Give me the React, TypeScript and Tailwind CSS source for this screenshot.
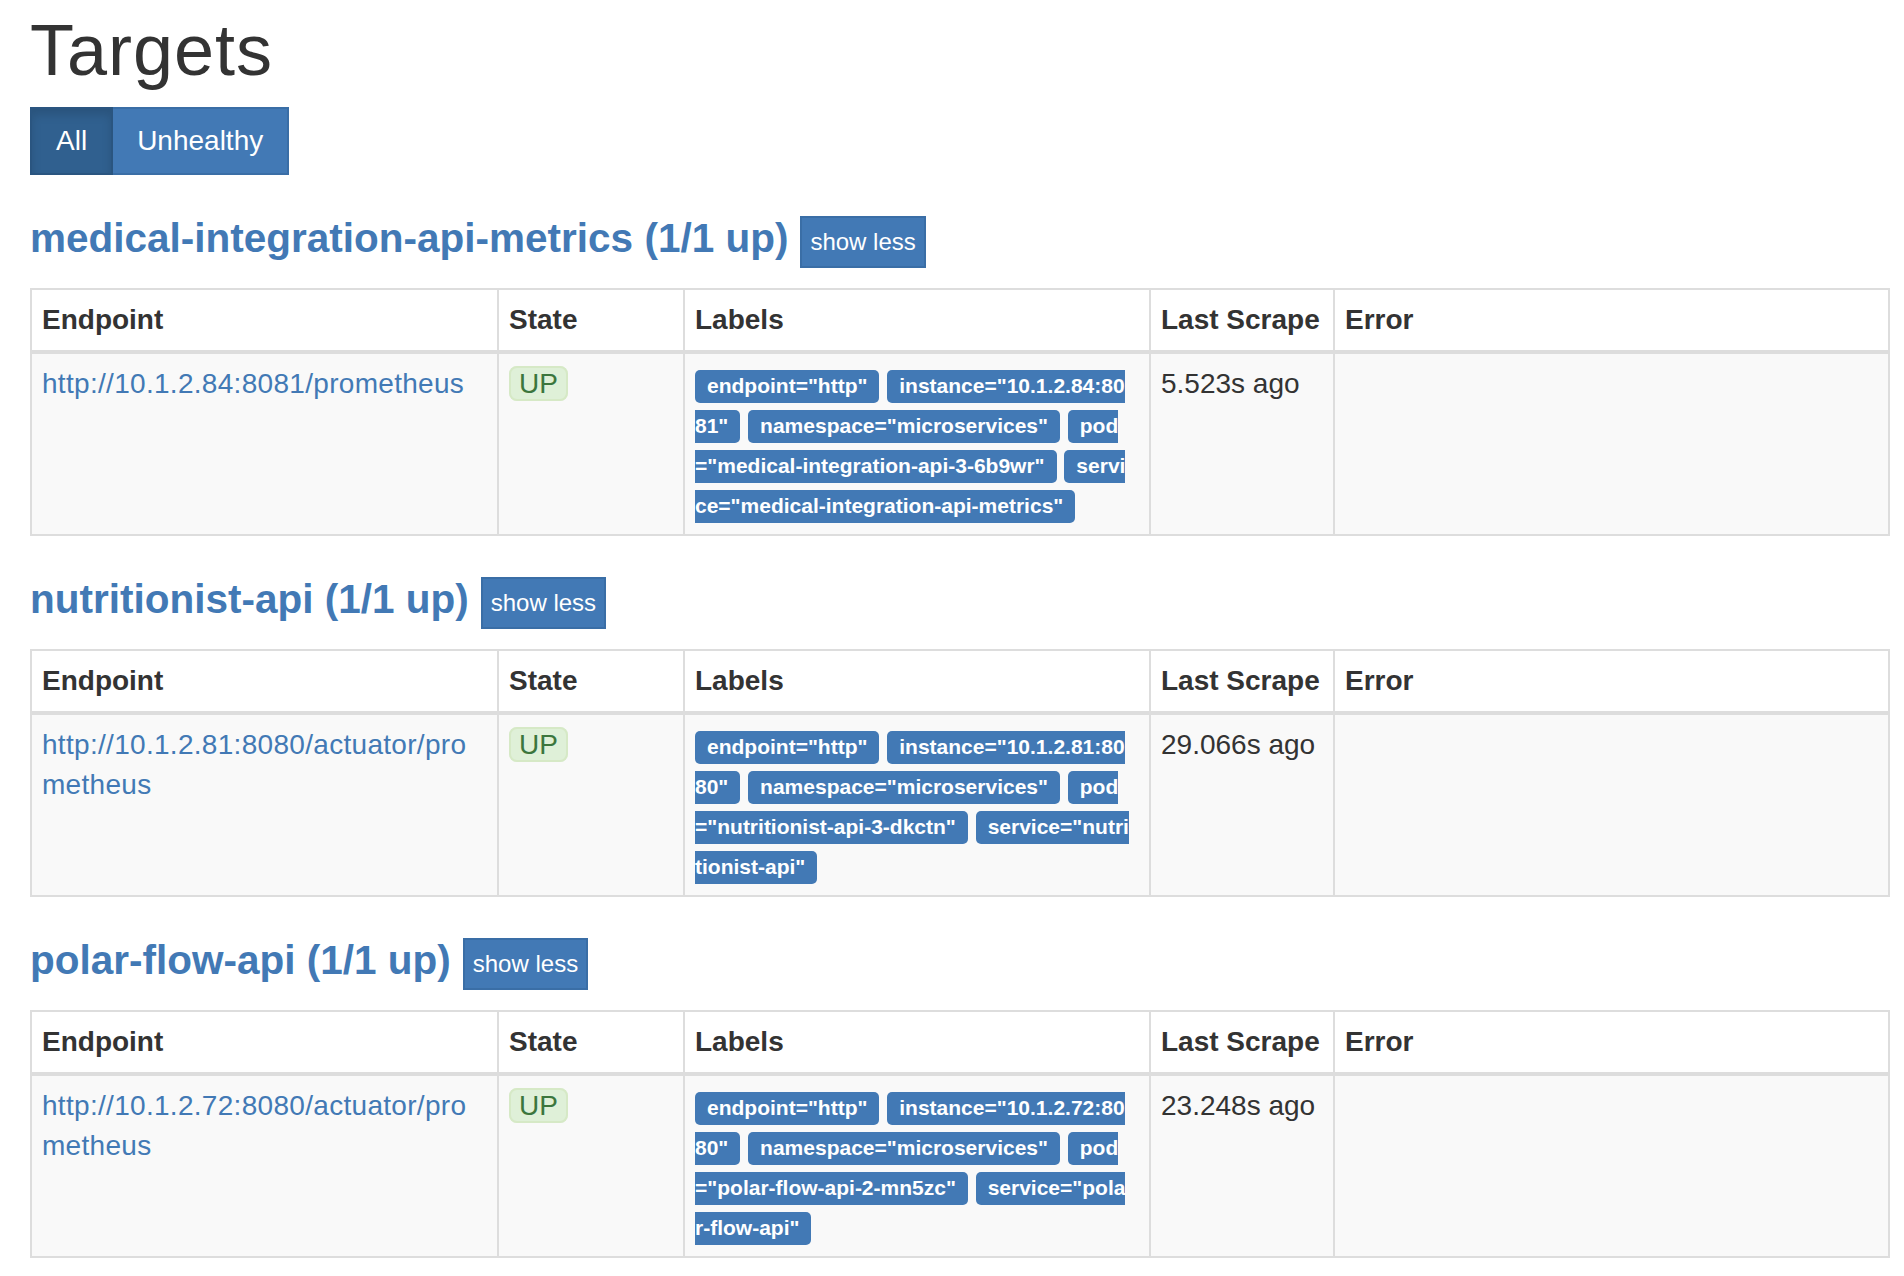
interface Target {
  job: string;
  endpoint: string;
  labels: string[];
  lastScrape: string;
}

const targets: Target[] = [
  {
    job: 'medical-integration-api-metrics',
    endpoint: 'http://10.1.2.84:8081/prometheus',
    labels: [
      'endpoint="http"',
      'instance="10.1.2.84:8081"',
      'namespace="microservices"',
      'pod="medical-integration-api-3-6b9wr"',
      'service="medical-integration-api-metrics"'
    ],
    lastScrape: '5.523s ago'
  },
  {
    job: 'nutritionist-api',
    endpoint: 'http://10.1.2.81:8080/actuator/prometheus',
    labels: [
      'endpoint="http"',
      'instance="10.1.2.81:8080"',
      'namespace="microservices"',
      'pod="nutritionist-api-3-dkctn"',
      'service="nutritionist-api"'
    ],
    lastScrape: '29.066s ago'
  },
  {
    job: 'polar-flow-api',
    endpoint: 'http://10.1.2.72:8080/actuator/prometheus',
    labels: [
      'endpoint="http"',
      'instance="10.1.2.72:8080"',
      'namespace="microservices"',
      'pod="polar-flow-api-2-mn5zc"',
      'service="polar-flow-api"'
    ],
    lastScrape: '23.248s ago'
  }
];

function TargetSection({ target }: { target: Target }) {
  return (
    <section className="mt-[41px]">
      {/* Job heading + toggle */}
      <div className="flex items-start gap-[12px]">
        <a href="#" className="text-[40.5px] leading-[45px] font-bold text-[#4279b5] whitespace-nowrap">
          {target.job} (1/1 up)
        </a>
        <button className="h-[52px] px-[8px] bg-[#4279b5] border-2 border-[#3a6ea6] text-white text-[24px] leading-none">
          show less
        </button>
      </div>

      <table className="mt-5 w-[1860px] table-fixed border-collapse border-2 border-[#ddd]">
        <colgroup>
          <col className="w-[467px]" />
          <col className="w-[186px]" />
          <col className="w-[466px]" />
          <col className="w-[184px]" />
          <col />
        </colgroup>
        <thead>
          <tr className="bg-white">
            {['Endpoint', 'State', 'Labels', 'Last Scrape', 'Error'].map((h) => (
              <th
                key={h}
                className="border-2 border-b-4 border-[#ddd] p-[10px] text-left font-bold leading-[40px] text-[#333] align-bottom"
              >
                {h}
              </th>
            ))}
          </tr>
        </thead>
        <tbody>
          <tr className="bg-[#f9f9f9]">
            <td className="border-2 border-[#ddd] p-[10px] align-top leading-[40px] break-all">
              <a href="#" className="text-[#4279b5] tracking-[0.3px]">{target.endpoint}</a>
            </td>
            <td className="border-2 border-[#ddd] p-[10px] align-top leading-[40px]">
              <span className="bg-[#dff0d8] border-2 border-[#d6e9c6] text-[#3c763d] rounded-[8px] px-[8px]">UP</span>
            </td>
            <td className="border-2 border-[#ddd] py-[10px] pl-[10px] pr-[18px] align-top leading-[40px] break-all">
              {target.labels.map((l, i) => (
                <span key={l}>
                  <span className="bg-[#4279b5] text-white font-bold text-[21px] leading-none rounded-[5px] px-[12px] pt-[4.2px] pb-[6.3px]">
                    {l}
                  </span>
                  {i < target.labels.length - 1 ? ' ' : ''}
                </span>
              ))}
            </td>
            <td className="border-2 border-[#ddd] p-[10px] align-top leading-[40px] text-[#333]">
              {target.lastScrape}
            </td>
            <td className="border-2 border-[#ddd] p-[10px] align-top leading-[40px]"></td>
          </tr>
        </tbody>
      </table>
    </section>
  );
}

export default function App() {
  return (
    <div className="min-h-screen bg-white px-[30px] pb-10 font-['Liberation_Sans',Arial,sans-serif] text-[28px] text-[#333]">
      <h1 className="mt-[10px] text-[72px] leading-[80px] font-normal tracking-[1px] text-[#333]">Targets</h1>

      {/* Filter toggle */}
      <div className="mt-[17px] flex">
        <button className="h-[68px] px-[24px] bg-[#30608f] border-2 border-[#2a5580] text-white shadow-[inset_0_6px_10px_rgba(0,0,0,0.13)]">
          All
        </button>
        <button className="h-[68px] px-[24px] bg-[#4279b5] border-2 border-l-0 border-[#3a6ea6] text-white">
          Unhealthy
        </button>
      </div>

      {targets.map((t) => (
        <TargetSection key={t.job} target={t} />
      ))}
    </div>
  );
}
